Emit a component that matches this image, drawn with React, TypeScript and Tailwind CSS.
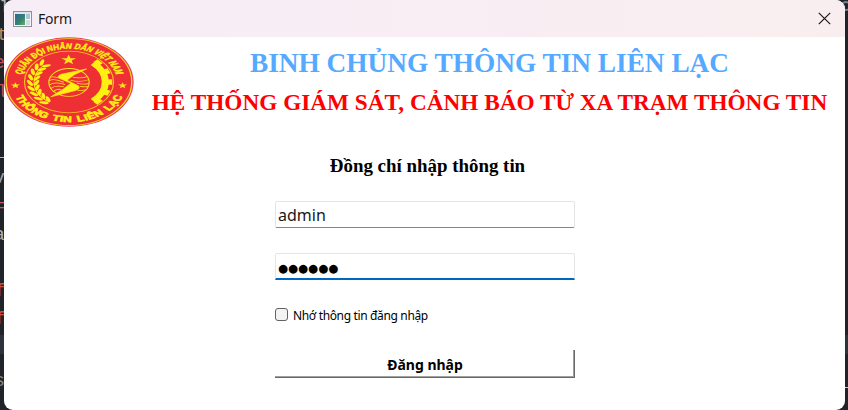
import React from "react";

const star = (cx: number, cy: number, r: number) =>
  Array.from({ length: 10 }, (_, i) => {
    const a = (Math.PI / 5) * i - Math.PI / 2;
    const q = i % 2 ? r * 0.4 : r;
    return `${cx + q * Math.cos(a)},${cy + q * Math.sin(a)}`;
  }).join(" ");

const polar = (r: number, deg: number) => {
  const a = (deg * Math.PI) / 180;
  return [100 + r * Math.cos(a), 100 + r * Math.sin(a)];
};

function Emblem() {
  const leaves = Array.from({ length: 9 }, (_, i) => 130 + i * 12);
  const teeth = [-44, -22, 0, 22, 44];
  return (
    <svg className="block h-[90px] w-[130px] shrink-0" viewBox="0 0 200 200" preserveAspectRatio="none">
      <defs>
        <path id="top" d="M26 100 A74 74 0 0 1 174 100" />
        <path id="bottom" d="M11 100 A89 89 0 0 0 189 100" />
      </defs>
      <circle cx="100" cy="100" r="99.5" fill="#e0455f" />
      <circle cx="100" cy="100" r="96.5" fill="#ee3035" stroke="#f6d21c" strokeWidth="2" />
      <circle cx="100" cy="100" r="68.5" fill="none" stroke="#f9c51c" strokeWidth="1.8" />
      <g fill="#fff012" stroke="#fff012" fontFamily="Liberation Sans, sans-serif" fontWeight="bold">
        <text fontSize="17" fontStyle="italic" strokeWidth=".8" textLength="200" lengthAdjust="spacingAndGlyphs">
          <textPath href="#top" startOffset="16">QUÂN ĐỘI NHÂN DÂN VIỆT NAM</textPath>
        </text>
        <text fontSize="18.5" strokeWidth="1.2" wordSpacing="3" textLength="212" lengthAdjust="spacing">
          <textPath href="#bottom" startOffset="34">THÔNG TIN LIÊN LẠC</textPath>
        </text>
      </g>
      <g fill="#ffe21a">
        <polygon points={star(99.5, 51, 12)} />
        <polygon points={star(17.5, 108, 7.5)} />
        <polygon points={star(182.5, 108, 7.5)} />
      </g>
      <path d="M67 143 A54 54 0 0 1 62 62" fill="none" stroke="#fff012" strokeWidth="1.6" />
      {leaves.map((d) => {
        const [ox, oy] = polar(60, d);
        const [ix, iy] = polar(50, d);
        return (
          <g key={d} fill="#fff012">
            <ellipse cx={ox} cy={oy} rx="3" ry="7.5" transform={`rotate(${d + 150} ${ox} ${oy})`} />
            <ellipse cx={ix} cy={iy} rx="2.8" ry="7" transform={`rotate(${d + 210} ${ix} ${iy})`} />
          </g>
        );
      })}
      <path d="M137 58 A56 56 0 0 1 137 142" fill="none" stroke="#fff012" strokeWidth="11" />
      {teeth.map((d) => (
        <rect key={d} x="158" y="94" width="8.5" height="12" fill="#fff012" transform={`rotate(${d} 100 100)`} />
      ))}
      <g fill="none" stroke="#ffe21a" strokeWidth="1.8">
        <circle cx="100" cy="101" r="31" />
        <path d="M72 89 Q78 88 84 91 M69 97 Q78 91 92 101 M70 106 Q80 98 94 106 M71 115 Q80 106 92 111 M75 122 Q82 114 88 117 M106 89 Q116 93 128 88 M102 96 Q116 102 130 95 M112 102 Q122 107 131 103 M117 109 Q124 112 129 110 M113 119 Q120 120 126 117" />
      </g>
      <path d="M127 71 L88 83 Q82 86 84 91 L103 103 L91 116 L72 133 L110 119 Q118 115 115 109 L97 96 L108 84 Z" fill="#fff012" stroke="#fff012" strokeWidth="1.2" />
    </svg>
  );
}

const fragments = [
  { t: "l", y: -2, x: -1, c: "text-[#b9b4ac]" },
  { t: "t", y: 25, x: -3, c: "text-[#c88a5c]" },
  { t: "e", y: 53, x: -6, c: "text-[#c8505a]" },
  { t: "l", y: 82, x: -3, c: "text-[#c8505a]" },
  { t: "_", y: 141, x: -6, c: "text-[#b9b4ac]" },
  { t: "v", y: 168, x: -6, c: "text-[#a0a4a8]" },
  { t: "=", y: 196, x: -5, c: "text-[#d0565f]" },
  { t: "a", y: 225, x: -6, c: "text-[#b0b4b8]" },
  { t: "f", y: 281, x: -5, c: "text-[#d0503f]" },
  { t: "f", y: 309, x: -5, c: "text-[#d0503f]" },
  { t: "s", y: 371, x: -6, c: "text-[#8a8a88]" },
];

export default function App() {
  return (
    <div className="relative h-[410px] w-[848px] overflow-hidden bg-[#202329] pl-1 pr-[3px] font-['Noto_Sans',sans-serif]">
      <div className="absolute left-0 top-[335px] h-[19px] w-full bg-[#2d323d]" />
      {fragments.map((f) => (
        <span
          key={f.y}
          className={`absolute font-['Liberation_Mono',monospace] text-[18px] leading-[20px] ${f.c}`}
          style={{ top: f.y, left: f.x }}
        >
          {f.t}
        </span>
      ))}
      <div className="absolute right-0 top-[387px] h-px w-[3px] bg-[#c9cbd0]" />
      <div className="absolute right-[-3px] top-[1px] size-[10px] rounded-full border-2 border-[#6d8798]" />

      <main className="relative flex h-[410px] flex-col overflow-hidden rounded-[9px] bg-white">
        <header className="flex h-[37px] shrink-0 items-center bg-linear-to-r from-[#f7edf7] to-[#f9eeef] pl-[9px] pr-[14px]">
          <svg className="h-4 w-[19px]" viewBox="0 0 19 16">
            <rect x=".5" y=".5" width="18" height="15" fill="#f4f6f7" stroke="#8b9297" />
            <rect x="1" y="1" width="17" height="2" fill="#dfe4e8" />
            <rect x="2" y="3" width="10" height="11" fill="url(#pane)" />
            <rect x="13" y="3" width="4" height="5" fill="#a9c3d8" />
            <rect x="13" y="9" width="4" height="5" fill="#d7dadd" />
            <defs>
              <linearGradient id="pane" x1="0" y1="0" x2="1" y2="1">
                <stop offset="0" stopColor="#31659e" />
                <stop offset=".55" stopColor="#33816f" />
                <stop offset="1" stopColor="#5fae70" />
              </linearGradient>
            </defs>
          </svg>
          <span className="ml-[6px] text-[14px] leading-5 tracking-[-0.2px] text-[#191919]">Form</span>
          <svg className="ml-auto size-[13px]" viewBox="0 0 13 13">
            <path d="M.8.8 12.2 12.2M12.2.8.8 12.2" stroke="#1c1719" strokeWidth="1.2" />
          </svg>
        </header>

        <section className="flex h-[90px] shrink-0 font-['Liberation_Serif',serif] font-bold">
          <Emblem />
          <div className="flex flex-1 flex-col items-center whitespace-nowrap pt-[10px]">
            <h1 className="text-[27.3px] leading-8 text-[#55aaff]">BINH CHỦNG THÔNG TIN LIÊN LẠC</h1>
            <h2 className="mt-[9px] text-[23.25px] leading-7 text-[#ff0000]">HỆ THỐNG GIÁM SÁT, CẢNH BÁO TỪ XA TRẠM THÔNG TIN</h2>
          </div>
        </section>

        <form className="ml-[271px] flex w-[300px] flex-col">
          <p className="mt-[27px] pl-[5px] text-center font-['Liberation_Serif',serif] text-[18.9px] font-bold leading-6 text-black">
            Đồng chí nhập thông tin
          </p>
          <div className="mt-[23px] flex h-[27px] items-center rounded-[2px] border border-[#e5e5e5] border-b-[#868686] pl-[2px] text-[16px] leading-6 text-[#191919]">
            admin
          </div>
          <div className="mt-[25px] flex h-[27px] items-center rounded-t-[2px] border border-b-2 border-[#e5e5e5] border-b-[#0067c0] pl-[2px] pt-[5px] font-['DejaVu_Sans',sans-serif] text-[11.5px] text-black">
            ●●●●●●
          </div>
          <label className="mt-[27px] flex h-[16px] items-center">
            <span className="mb-[1px] size-[13px] rounded-[3px] border border-[#626262] bg-[#f3f3f3]" />
            <span className="ml-[5px] whitespace-nowrap pt-[2px] text-[12px] leading-4 tracking-[-0.35px] text-black">Nhớ thông tin đăng nhập</span>
          </label>
          <div className="mt-[27px] h-[28px] border-b border-r border-[#696969]">
            <div className="flex h-[27px] items-center justify-center border-b border-r border-[#a0a0a0] pl-[2px] pt-[3px] text-[14px] font-bold leading-5 text-black">
              Đăng nhập
            </div>
          </div>
        </form>
      </main>
    </div>
  );
}
